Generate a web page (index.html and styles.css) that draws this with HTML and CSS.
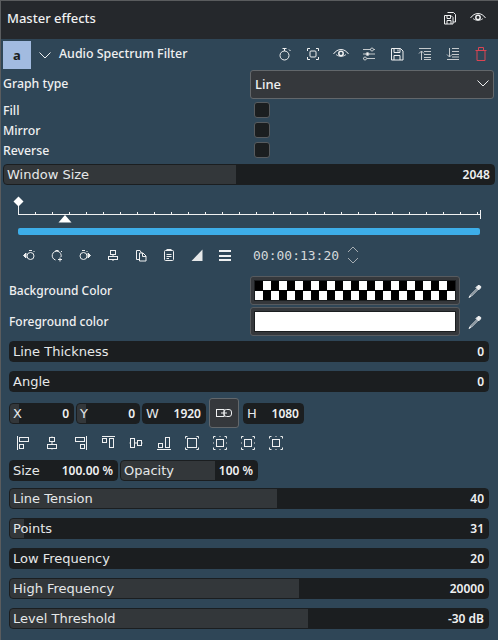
FILE: index.html
```html
<!DOCTYPE html>
<html lang="en">
<head>
    <meta charset="UTF-8">
    <meta name="viewport" content="width=device-width, initial-scale=1.0">
    <title>Master effects</title>
    <link rel="stylesheet" href="styles.css">
</head>
<body>

    <div class="panel">

        <div class="panelHead">
            <span class="panelTitle">Master effects</span>
            <div class="iconRow headIcons">
                <svg class="icon" viewBox="0 0 16 16"><path d="M5.500 2.500h6l2 2v7.500h-2.500M2.500 5.500h6.500l2 2v6.500h-8.500z"/><path d="M5 5.500v3h3.500v-3M5 14v-3.500h4v3.500"/></svg>
                <svg class="icon" viewBox="0 0 16 16"><path d="M.5 8c4-6 11-6 15 0"/><path d="M3 8.500c3 2.500 7 2.500 10 0" class="thin"/><circle cx="8" cy="7.500" r="2.200" class="ring"/></svg>
            </div>
        </div>

        <div class="effectHead">
            <div class="badge">a</div>
            <svg class="chevron" viewBox="0 0 12 7"><path d="M.5.500l5.500 5.500 5.500-5.500"/></svg>
            <span class="effectName">Audio Spectrum Filter</span>
            <div class="iconRow effectIcons">
                <svg class="icon" viewBox="0 0 16 16"><circle cx="7.500" cy="9.500" r="4.500"/><path d="M5.500 2.500h4M7.500 2.500v2.500M12 3.500l1.500 1.500"/></svg>
                <svg class="icon" viewBox="0 0 16 16"><path d="M2.500 5v-2.500h2.500M11 2.500h2.500v2.500M13.500 11v2.500h-2.500M5 13.500h-2.500v-2.500"/><rect x="5" y="5" width="6" height="6" rx="1"/></svg>
                <svg class="icon" viewBox="0 0 16 16"><path d="M.5 8c4-6 11-6 15 0"/><path d="M3 8.500c3 2.500 7 2.500 10 0" class="thin"/><circle cx="8" cy="7.500" r="2.200" class="ring"/></svg>
                <svg class="icon dim" viewBox="0 0 16 16"><path d="M2 3.500h8M12.500 3.500h1.500M2 8h3M8 8h6M2 12.500h1M6 12.500h8"/><circle cx="11" cy="3.500" r="1.500"/><circle cx="6.500" cy="8" r="1.500" class="solid"/><circle cx="4" cy="12.500" r="1.500"/></svg>
                <svg class="icon" viewBox="0 0 16 16"><path d="M2.500 2.500h9l2.500 2.500v9h-11.500z"/><path d="M5 2.500v4h6v-4M9 3.500v2M5 14v-4.500h6v4.500"/></svg>
                <svg class="icon dim" viewBox="0 0 16 16"><path d="M2 2.500h12M7 5.500h7M7 8.500h7M7 11.500h7M7 13.500h7M4.500 14v-9M2 7.500l2.500-2.500 2.500 2.500"/></svg>
                <svg class="icon dim" viewBox="0 0 16 16"><path d="M2 13.500h12M7 11h7M7 8.500h7M7 5.500h7M7 2.500h7M4.500 2v9M2 8.500l2.500 2.500 2.500-2.500"/></svg>
                <svg class="icon red" viewBox="0 0 16 16"><path d="M2.500 4.500h11M5.500 4.500v-3h5v3M4 4.500v10h8v-10"/></svg>
            </div>
        </div>

        <div class="formRow comboRow">
            <label class="formLabel">Graph type</label>
            <div class="combo">
                <span>Line</span>
                <svg class="chevron small" viewBox="0 0 12 7"><path d="M.5.500l5.500 5.500 5.500-5.500"/></svg>
            </div>
        </div>

        <div class="checks">
            <div class="formRow checkRow"><label class="formLabel">Fill</label><div class="checkbox"></div></div>
            <div class="formRow checkRow"><label class="formLabel">Mirror</label><div class="checkbox"></div></div>
            <div class="formRow checkRow"><label class="formLabel">Reverse</label><div class="checkbox"></div></div>
        </div>

        <div class="slider windowSize" style="--fill: 47.400%"><span>Window Size</span><b>2048</b></div>

        <svg class="ruler" viewBox="0 0 497 30" id="ruler">
            <path class="rulerLine" d="M17 19.500h463M17.500 6v14M479.500 15v9"/>
            <path class="rulerLine" id="ticks" d=""/>
            <path class="rulerMark" d="M17.500 1.500l5 5-5 5-5-5z"/>
            <path class="rulerMark" d="M64 20l6.500 7.500h-13z"/>
        </svg>
        <div class="zoneBar"></div>

        <div class="transport">
            <div class="iconRow">
                <svg class="icon" viewBox="0 0 16 16"><circle cx="9.500" cy="9" r="3.500"/><path d="M8 3.500h3M12.500 4l1 1"/><path class="solid" d="M5 6v5l-2.500-2.500z"/></svg>
                <svg class="icon" viewBox="0 0 16 16"><path d="M6.500 13a4.500 4.500 0 1 1 5.500-3"/><path d="M6.500 3.500h3M12 4l1 1M11 10.500v4M9 12.500h4"/></svg>
                <svg class="icon" viewBox="0 0 16 16"><circle cx="6.500" cy="9" r="3.500"/><path d="M5 3.500h3M9.500 4l1 1"/><path class="solid" d="M11 6v5l2.500-2.500z"/></svg>
                <svg class="icon" viewBox="0 0 16 16"><rect x="5.500" y="3.500" width="5" height="4"/><rect x="3.500" y="9.500" width="9" height="3"/><path d="M8 7.500v2M8 12.500v1.500"/></svg>
                <svg class="icon" viewBox="0 0 16 16"><path d="M6.500 12.500h-3v-9h3.500l1.500 2.500"/><path d="M6.500 6h3.500l3 3v5h-6.500z"/><path d="M9.500 6v3.500h3.500"/></svg>
                <svg class="icon" viewBox="0 0 16 16"><rect x="3.500" y="3.500" width="9" height="10" rx="1"/><path class="thick" d="M5.500 3h5"/><path d="M5.500 7.500h5M5.500 9.500h5M5.500 11.500h2.500"/></svg>
                <svg class="icon" viewBox="0 0 16 16"><path class="wedge" d="M2.500 14l11-11.500v11.500z"/></svg>
                <svg class="icon" viewBox="0 0 16 16"><path class="thick" d="M2 4h12M2 9h12M2 13h12"/></svg>
            </div>
            <span class="timecode">00:00:13:20</span>
            <svg class="spinner" viewBox="0 0 12 20"><path d="M1 7l5-5 5 5M1 13l5 5 5-5"/></svg>
        </div>

        <div class="colorRows">
            <div class="formRow colorRow">
                <label class="formLabel">Background Color</label>
                <div class="swatchBox"><div class="swatch checker"></div></div>
                <svg class="icon dropper" viewBox="0 0 16 16"><path class="solid" d="M9 4.500l2.500 2.500 2-2c1-1.500-.5-3-2.500-2.500z"/><path d="M10 5.500l-6.500 6.500-1.500 2.500 2.500-1.500 6.500-6.500"/></svg>
            </div>
            <div class="formRow colorRow">
                <label class="formLabel">Foreground color</label>
                <div class="swatchBox"><div class="swatch white"></div></div>
                <svg class="icon dropper" viewBox="0 0 16 16"><path class="solid" d="M9 4.500l2.500 2.500 2-2c1-1.500-.5-3-2.500-2.500z"/><path d="M10 5.500l-6.500 6.500-1.500 2.500 2.500-1.500 6.500-6.500"/></svg>
            </div>
        </div>

        <div class="slider lineThickness"><span>Line Thickness</span><b>0</b></div>
        <div class="slider"><span>Angle</span><b>0</b></div>

        <div class="geometry">
            <div class="slider field fieldX" style="--fill: 14%"><span>X</span><b>0</b></div>
            <div class="slider field fieldY" style="--fill: 14%"><span>Y</span><b>0</b></div>
            <div class="slider field fieldW"><span>W</span><b>1920</b></div>
            <div class="linkBtn">
                <svg class="icon" viewBox="0 0 16 16"><rect x=".5" y="4.500" width="7.500" height="7"/><rect x="8" y="4.500" width="7.500" height="7" rx="2.500"/><path d="M5 8h6"/></svg>
            </div>
            <div class="slider field fieldH"><span>H</span><b>1080</b></div>
        </div>

        <div class="iconRow alignIcons">
            <svg class="icon" viewBox="0 0 14 14"><path d="M.5 0v14"/><rect x="2.500" y="1.500" width="9" height="4"/><rect x="2.500" y="8.500" width="4" height="4"/></svg>
            <svg class="icon" viewBox="0 0 14 14"><path class="dim" d="M7 0v1M7 13v1"/><rect x="4.500" y="1.500" width="5" height="4"/><rect x="2.500" y="8.500" width="9" height="4"/><path d="M7 5.500v3"/></svg>
            <svg class="icon" viewBox="0 0 14 14"><path d="M13.500 0v14"/><rect x="2.500" y="1.500" width="9" height="4"/><rect x="7.500" y="8.500" width="4" height="4"/></svg>
            <svg class="icon" viewBox="0 0 14 14"><path d="M1 .5h13"/><rect x="1.500" y="2.500" width="4" height="4"/><rect x="8.500" y="2.500" width="4" height="9"/></svg>
            <svg class="icon" viewBox="0 0 14 14"><path class="dim" d="M0 7h1M13 7h1"/><rect x="1.500" y="2.500" width="4" height="9"/><rect x="8.500" y="4.500" width="4" height="5"/><path d="M5.500 7h3"/></svg>
            <svg class="icon" viewBox="0 0 14 14"><path d="M0 13.500h14"/><rect x="1.500" y="7.500" width="4" height="4"/><rect x="8.500" y="1.500" width="4" height="10"/></svg>
            <svg class="icon" viewBox="0 0 14 14"><path class="brackets" d="M.5 2.500v-2h2M11.500 .5h2v2M13.500 11.500v2h-2M2.500 13.500h-2v-2"/><rect x="2.500" y="2.500" width="9" height="9"/></svg>
            <svg class="icon" viewBox="0 0 14 14"><path class="brackets" d="M.5 2.500v-2h2M11.500 .5h2v2M13.500 11.500v2h-2M2.500 13.500h-2v-2"/><path class="dim" d="M6 .5h2M6 13.500h2M.5 6v2M13.500 6v2"/><rect x="3.500" y="3.500" width="7" height="7"/></svg>
            <svg class="icon" viewBox="0 0 14 14"><path class="brackets" d="M.5 2.500v-2h2M11.500 .5h2v2M13.500 11.500v2h-2M2.500 13.500h-2v-2"/><path class="dim" d="M.5 6v2M13.500 6v2"/><rect x="3.500" y="3.500" width="7" height="7"/></svg>
            <svg class="icon" viewBox="0 0 14 14"><path class="brackets" d="M.5 2.500v-2h2M11.500 .5h2v2M13.500 11.500v2h-2M2.500 13.500h-2v-2"/><path class="dim" d="M6 .5h2M6 13.500h2"/><rect x="3.500" y="3.500" width="7" height="7"/></svg>
        </div>

        <div class="transformRow">
            <div class="slider sizeField"><span>Size</span><b>100.00 %</b></div>
            <div class="slider opacityField" style="--fill: 69%"><span>Opacity</span><b>100 %</b></div>
        </div>

        <div class="params">
            <div class="slider" style="--fill: 55.800%"><span>Line Tension</span><b>40</b></div>
            <div class="slider" style="--fill: 2.900%"><span>Points</span><b>31</b></div>
            <div class="slider"><span>Low Frequency</span><b>20</b></div>
            <div class="slider" style="--fill: 60.400%"><span>High Frequency</span><b>20000</b></div>
            <div class="slider" style="--fill: 62.300%"><span>Level Threshold</span><b>-30 dB</b></div>
        </div>

    </div>

    <script>
        // ruler ticks every 17px
        let d = "";
        for (let x = 34.5; x < 478; x += 17) {
            d += "M" + x + " 17v3";
        }
        document.getElementById("ticks").setAttribute("d", d);
    </script>

</body>
</html>
```

FILE: styles.css
```css
* {
    box-sizing: border-box;
}

html, body {
    height: 100%;
}

body {
    margin: 0;
    background-color: #2f4657;
    color: #eff0f1;
    font-family: 'Noto Sans', sans-serif;
    font-size: 12.300px;
    overflow: hidden;
}

.panel {
    height: 640px;
    border-top: 1px solid #5a5c5e;
    border-left: 1px solid #5a5c5e;
}

.panelHead {
    height: 38px;
    padding: 0 12px 4px 6px;
    display: flex;
    align-items: center;
    justify-content: space-between;
    background-color: #25282c;
}

.panelTitle {
    font-size: 13px;
    font-weight: 500;
}

.iconRow {
    display: flex;
    align-items: center;
    gap: 12px;
}

.icon {
    display: block;
    flex: none;
    width: 16px;
    height: 16px;
    fill: none;
    stroke: #eff0f1;
    stroke-width: 1;
}

.icon.dim {
    stroke: #c4c9cc;
}

.icon .solid {
    fill: #eff0f1;
}

.icon .thin {
    stroke-width: 0.8;
}

.icon .thick {
    stroke-width: 2;
}

.icon .ring {
    stroke-width: 1.500;
}

.icon .dim {
    stroke: #8d979e;
}

.icon .wedge {
    fill: #e6e8e9;
    stroke: none;
}

.icon.red {
    stroke: #da4453;
}

.effectHead {
    margin-top: 2px;
    height: 28px;
    padding-left: 2px;
    display: flex;
    align-items: center;
}

.badge {
    width: 28px;
    height: 28px;
    background-color: #a2bbe0;
    color: #1b1e20;
    font-weight: 700;
    font-size: 13px;
    text-align: center;
    line-height: 28px;
}

.chevron {
    width: 12px;
    height: 7px;
    margin-left: 8px;
    fill: none;
    stroke: #eff0f1;
    stroke-width: 1;
}

.chevron.small {
    margin-left: 0;
}

.effectName {
    margin-left: 8px;
    padding-bottom: 3px;
    font-size: 12.400px;
    font-weight: 500;
}

.effectIcons {
    margin-left: auto;
    padding-right: 9px;
    padding-bottom: 2px;
}

.formRow {
    display: flex;
    align-items: center;
}

.formLabel {
    font-weight: 500;
    width: 249px;
    flex: none;
}

.comboRow {
    margin-top: 1px;
    padding-left: 2px;
    height: 29px;
}

.comboRow .formLabel {
    padding-bottom: 2px;
}

.combo {
    width: 244px;
    height: 29px;
    margin-left: -2px;
    padding: 0 4px 2px 4px;
    display: flex;
    align-items: center;
    justify-content: space-between;
    background-color: #35383c;
    border: 1px solid #62676b;
    border-radius: 3px;
    font-size: 13px;
    font-weight: 500;
}

.checks {
    margin-top: 3px;
    display: flex;
    flex-direction: column;
    gap: 4px;
    padding-left: 2px;
}

.checkRow {
    height: 16px;
}

.checkbox {
    width: 16px;
    height: 16px;
    margin-left: 2px;
    background-color: #1b1e20;
    border: 1px solid #575b5f;
    border-radius: 3px;
}

.slider {
    --fill: 0%;
    height: 21px;
    margin: 0 9px 0 8px;
    padding: 0 4px 0 3px;
    display: flex;
    align-items: center;
    justify-content: space-between;
    border-radius: 4px;
    background: linear-gradient(to right, #33373a var(--fill), #1b1e20 var(--fill));
    border: 1px solid #1b1e20;
    font-family: 'DejaVu Sans', sans-serif;
    font-size: 13px;
    color: #e6e8e9;
    white-space: nowrap;
}

.slider b {
    font-family: 'Noto Sans', sans-serif;
    font-size: 12px;
    font-weight: 600;
    color: #eff0f1;
}

.windowSize {
    margin: 6px 3px 0 2px;
}

.ruler {
    display: block;
    width: 497px;
    height: 30px;
    margin-top: 10px;
}

.rulerLine {
    fill: none;
    stroke: #eff0f1;
    stroke-width: 1;
}

.rulerMark {
    fill: #ffffff;
}

.zoneBar {
    height: 7px;
    margin: 3px 18px 0 17px;
    background-color: #3daee9;
    border-radius: 2px;
}

.transport {
    margin-top: 10px;
    padding-left: 20px;
    display: flex;
    align-items: center;
}

.timecode {
    margin-left: 20px;
    font-family: 'DejaVu Sans Mono', monospace;
    font-size: 13px;
    color: #d5d9db;
}

.spinner {
    width: 12px;
    height: 20px;
    margin-left: 8px;
    fill: none;
    stroke: #a6adb2;
    stroke-width: 1;
}

.colorRows {
    margin-top: 11px;
    padding-left: 8px;
    display: flex;
    flex-direction: column;
    gap: 2px;
}

.colorRow {
    height: 29px;
}

.colorRow .formLabel {
    width: 241px;
    font-size: 12px;
}

.swatchBox {
    width: 210px;
    height: 29px;
    padding: 4px;
    background-color: #35383c;
    border: 1px solid #575b5f;
    border-radius: 3px;
}

.swatch {
    height: 100%;
    box-shadow: 0 0 0 1px #1b1e20;
}

.checker {
    background: conic-gradient(#fff 25%, #000 0 50%, #fff 0 75%, #000 0) 0 0 / 16px 19px;
}

.white {
    background-color: #ffffff;
}

.dropper {
    margin-left: 7px;
}

.lineThickness {
    margin-top: 5px;
}

.lineThickness + .slider {
    margin-top: 9px;
}

.geometry {
    margin: 6px 0 0 8px;
    height: 30px;
    display: flex;
    align-items: center;
    gap: 2px;
}

.field {
    margin: 0;
    flex: none;
}

.fieldX {
    width: 65px;
}

.fieldY, .fieldW {
    width: 64px;
}

.fieldH {
    width: 61px;
}

.linkBtn {
    width: 30px;
    height: 30px;
    margin: 0 2px 0 1px;
    display: flex;
    align-items: center;
    justify-content: center;
    background-color: #35383c;
    border: 1px solid #62676b;
    border-radius: 3px;
}

.alignIcons {
    margin-top: 7px;
    padding-left: 15px;
}

.alignIcons .icon {
    width: 14px;
    height: 14px;
    margin: 1px;
}

.transformRow {
    margin: 9px 0 0 8px;
    display: flex;
    gap: 2px;
}

.sizeField {
    margin: 0;
    width: 109px;
}

.opacityField {
    margin: 0;
    width: 138px;
}

.params {
    margin-top: 7px;
    display: flex;
    flex-direction: column;
    gap: 9px;
}
```
